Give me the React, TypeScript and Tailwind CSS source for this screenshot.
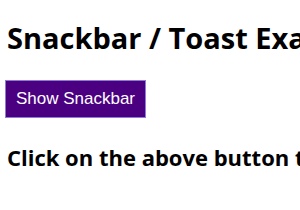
const App = () => {
  return (
    <div className="min-h-screen overflow-hidden bg-white px-[7px] pt-[20px] font-['Open_Sans',sans-serif] text-black">
      <h1 className="whitespace-nowrap text-[29px] font-bold leading-[36px]">
        Snackbar / Toast Example
      </h1>
      <button className="mt-[24px] ml-[-2px] flex h-[38px] w-[141px] items-center justify-center border border-[#8d7bd6] bg-[#4b0082] font-['Liberation_Sans',Arial,sans-serif] text-[17px] text-white">
        Show Snackbar
      </button>
      <h3 className="mt-[25px] whitespace-nowrap text-[22px] font-bold leading-[28px]">
        Click on the above button to see the snackbar
      </h3>
    </div>
  )
}

export default App
